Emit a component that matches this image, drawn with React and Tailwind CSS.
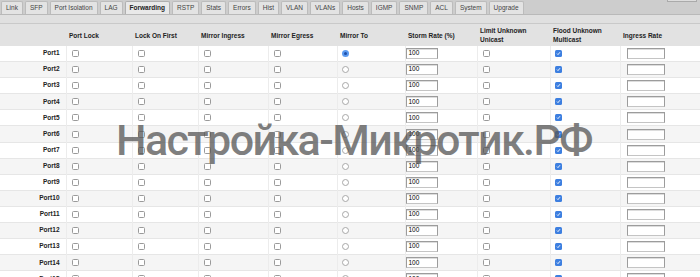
import React from 'react';

const tabs = ['Link', 'SFP', 'Port Isolation', 'LAG', 'Forwarding', 'RSTP', 'Stats', 'Errors', 'Hist', 'VLAN', 'VLANs', 'Hosts', 'IGMP', 'SNMP', 'ACL', 'System', 'Upgrade'];

const cols = [
  { label: '', w: 66 },
  { label: 'Port Lock', w: 66 },
  { label: 'Lock On First', w: 66 },
  { label: 'Mirror Ingress', w: 70 },
  { label: 'Mirror Egress', w: 69 },
  { label: 'Mirror To', w: 68 },
  { label: 'Storm Rate (%)', w: 72 },
  { label: 'Limit Unknown Unicast', w: 73 },
  { label: 'Flood Unknown Multicast', w: 70 },
  { label: 'Ingress Rate', w: 80 },
];

function Box({ checked }) {
  if (checked) {
    return (
      <span className="flex w-[7px] h-[7px] rounded-[1.5px] bg-[#3d7fe0] items-center justify-center">
        <svg width="5" height="5" viewBox="0 0 5 5">
          <path d="M1 2.6 L2 3.6 L4 1.2" stroke="white" strokeWidth="0.9" fill="none" />
        </svg>
      </span>
    );
  }
  return <span className="block w-[7px] h-[7px] rounded-[1.5px] border border-[#9a9a9a] bg-white" />;
}

function Radio({ on }) {
  if (on) {
    return (
      <span className="flex w-[7px] h-[7px] rounded-full bg-[#5b9af0] items-center justify-center">
        <span className="w-[3px] h-[3px] rounded-full bg-[#1e4fa8]" />
      </span>
    );
  }
  return <span className="block w-[7px] h-[7px] rounded-full border border-[#a8a8a8] bg-white" />;
}

function Field({ w, value }) {
  return (
    <span className={`flex items-center h-[11px] ${w} border border-[#9c9c9c] border-b-[#c4c4c4] bg-white pl-[2px] text-[6.5px] text-black leading-none shadow-[inset_0_1px_0_#ddd]`}>
      {value}
    </span>
  );
}

function Cell({ pad, children, first }) {
  return (
    <td className={`p-0 text-[6.5px] leading-none ${first ? '' : 'border-l border-[#ececec]'}`}>
      <div className={`flex items-center h-[15.1px] ${pad}`}>{children}</div>
    </td>
  );
}

export default function App() {
  const ports = Array.from({ length: 16 }, (_, i) => i + 1);
  return (
    <div className="relative w-[700px] h-[277px] overflow-hidden bg-white font-['Liberation_Sans',Arial,sans-serif]">
      <div className="flex h-[15px] bg-[#cdcdcd] border-b border-[#b9b9b9] pl-[1px] pt-[1px] gap-[2px]">
        {tabs.map(t => (
          <div
            key={t}
            className={`h-[13px] px-[4px] flex items-center text-[6.5px] rounded-t-[2px] border border-b-0 ${t === 'Forwarding' ? 'bg-[#e9e9e9] border-[#b0b0b0] font-bold text-[#222]' : 'bg-[#e3e3e3] border-[#bcbcbc] text-[#444]'}`}
          >
            {t}
          </div>
        ))}
        <div className="flex-1" />
        <div className="w-[30px] h-[2px] -mt-[1px] mr-[3px] border border-t-0 border-[#aaa] bg-[#ddd]" />
      </div>
      <div className="h-[9px] bg-[#e0e0e0] border-b border-[#c9c9c9]" />
      <table className="border-collapse table-fixed w-[700px]">
        <colgroup>
          {cols.map((c, i) => <col key={i} style={{ width: c.w }} />)}
        </colgroup>
        <thead>
          <tr className="bg-[#e2e2e2]">
            {cols.map((c, i) => (
              <th key={i} className="p-0 text-left align-middle text-[6.5px] font-bold text-[#222] leading-[9px]">
                <div className="h-[22px] flex items-center pl-[3px] pr-[10px]">{c.label}</div>
              </th>
            ))}
          </tr>
        </thead>
        <tbody>
          {ports.map(p => (
            <tr key={p} className={`border-b border-[#e6e6e6] ${p % 2 === 0 ? 'bg-[#f5f5f5]' : 'bg-white'}`}>
              <Cell first pad="justify-end pr-[6px] font-bold text-[#222]">Port{p}</Cell>
              {[0, 1, 2, 3].map(k => (
                <Cell key={k} pad="pl-[5px]"><Box /></Cell>
              ))}
              <Cell pad="pl-[4px]"><Radio on={p === 1} /></Cell>
              <Cell pad="pl-0"><Field w="w-[32px]" value="100" /></Cell>
              <Cell pad="pl-[5px]"><Box /></Cell>
              <Cell pad="pl-[4px]"><Box checked /></Cell>
              <Cell pad="pl-[6px]"><Field w="w-[38px]" value="" /></Cell>
            </tr>
          ))}
        </tbody>
      </table>
      <div className="absolute left-[116px] top-[119px] text-[43px] font-medium font-['Roboto',sans-serif] text-[#555]/75 leading-none tracking-[-1.6px] whitespace-nowrap pointer-events-none">
        Настройка-Микротик.РФ
      </div>
    </div>
  );
}
